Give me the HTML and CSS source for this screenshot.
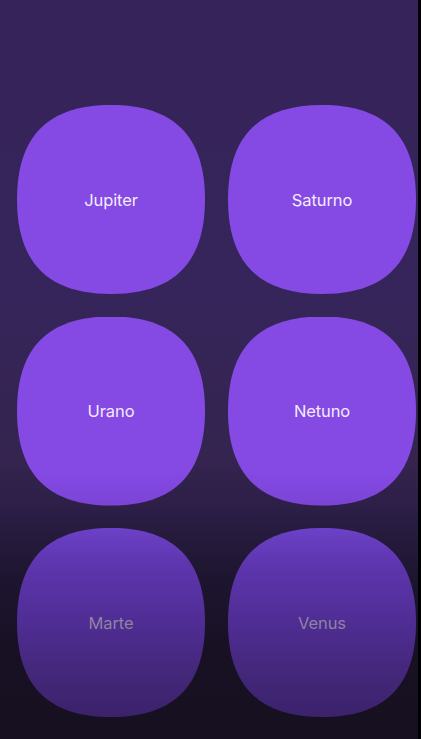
FILE: index.html
```html
<!DOCTYPE html>
<html>
<head>
<meta charset="utf-8">
<link rel="stylesheet" href="styles.css">
</head>
<body>
<div class="screen">
  <div class="grid">
    <div class="card"><span>Jupiter</span></div>
    <div class="card"><span>Saturno</span></div>
    <div class="card"><span>Urano</span></div>
    <div class="card"><span>Netuno</span></div>
    <div class="card faded"><span>Marte</span></div>
    <div class="card faded"><span>Venus</span></div>
  </div>
</div>
</body>
</html>
```
FILE: styles.css
```css
html, body {
  margin: 0;
  padding: 0;
  height: 100%;
  background: #000;
}
.screen {
  width: 418px;
  height: 739px;
  border-right: 3px solid #000;
  box-sizing: content-box;
  background: linear-gradient(to bottom,
    #35235a 0px,
    #36255a 300px,
    #34244f 460px,
    #2d1f48 505px,
    #261a3d 535px,
    #1d152f 580px,
    #181124 650px,
    #161020 739px);
  overflow: hidden;
}
.grid {
  display: grid;
  grid-template-columns: 188px 188px;
  grid-auto-rows: 189px;
  column-gap: 23px;
  row-gap: 22.5px;
  padding: 105px 0 0 17px;
}
.card {
  background: #8549e4;
  clip-path: path('M 94 0 C 157 0, 188 31.2, 188 94.5 C 188 157.8, 157 189, 94 189 C 31 189, 0 157.8, 0 94.5 C 0 31.2, 31 0, 94 0 Z');
  display: flex;
  align-items: center;
  justify-content: center;
  font-family: Inter, "Noto Sans", sans-serif;
  font-size: 16.5px;
  color: #f3ecff;
  letter-spacing: -0.1px;
}
.card:nth-child(3), .card:nth-child(4) {
  background: linear-gradient(to bottom, #8549e4 0%, #8549e4 82%, #7a44d5 100%);
}
.card.faded {
  background: linear-gradient(to bottom,
    #6c41c8 0%,
    #5d35ad 20%,
    #4f2d94 50%,
    #432779 78%,
    #3b226b 100%);
  color: #8e83a0;
}
```
